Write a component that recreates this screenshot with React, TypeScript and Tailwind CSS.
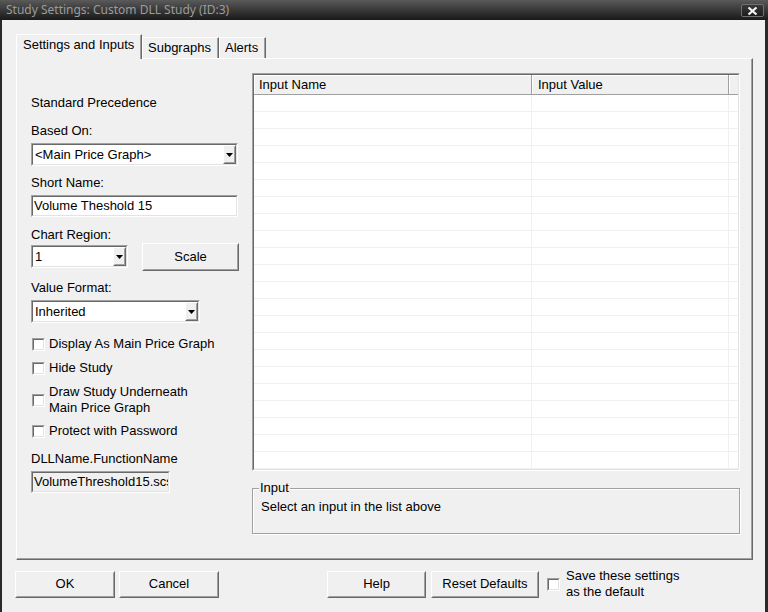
import React from "react";

type BoxProps = { className?: string; inner?: string; children?: React.ReactNode };

function Sunken({ className = "", inner = "", children }: BoxProps) {
  return (
    <div className={`border border-t-[#a0a0a0] border-l-[#a0a0a0] border-r-white border-b-white ${className}`}>
      <div className={`h-full border border-t-[#696969] border-l-[#696969] border-r-[#e3e3e3] border-b-[#e3e3e3] ${inner}`}>
        {children}
      </div>
    </div>
  );
}

function Raised({ className = "", inner = "", children }: BoxProps) {
  return (
    <div className={`border border-t-white border-l-white border-r-[#696969] border-b-[#696969] ${className}`}>
      <div className={`h-full border border-t-[#f0f0f0] border-l-[#f0f0f0] border-r-[#a0a0a0] border-b-[#a0a0a0] bg-[#f0f0f0] ${inner}`}>
        {children}
      </div>
    </div>
  );
}

function Combo({ w, text }: { w: string; text: string }) {
  return (
    <Sunken className={`h-[23px] ${w}`} inner="flex bg-white">
      <div className="flex-1 overflow-hidden whitespace-nowrap pl-[2px] leading-[19px]">{text}</div>
      <Raised className="h-full w-[13px]" inner="flex items-center justify-center">
        <svg width="7" height="4" viewBox="0 0 7 4">
          <polygon points="0,0 7,0 3.5,4" fill="#000" />
        </svg>
      </Raised>
    </Sunken>
  );
}

function Check() {
  return <Sunken className="h-[13px] w-[13px] shrink-0" inner="bg-white" />;
}

function Button({ w, label }: { w: string; label: string }) {
  return (
    <Raised className={`h-[27px] shrink-0 ${w}`} inner="flex items-center justify-center">
      {label}
    </Raised>
  );
}

const rows = Array.from({ length: 23 }, (_, i) => i);

export default function App() {
  return (
    <div className="flex h-[612px] w-[768px] flex-col overflow-hidden font-['Liberation_Sans',Arial,sans-serif] text-[13px] leading-[16px] text-black">
      {/* title bar */}
      <div className="flex h-[20px] shrink-0 items-start justify-between bg-gradient-to-b from-[#5a5a5a] to-[#1a1a1a]">
        <div className="pl-[6px] pt-[2px] font-['Noto_Sans',sans-serif] text-[12px] text-[#9c9c9c]">
          Study Settings: Custom DLL Study (ID:3)
        </div>
        <div className="mr-[4px] mt-[4px] flex h-[13px] w-[23px] items-center justify-center rounded-[2px] border border-[#707070] bg-gradient-to-b from-[#3a3a3a] to-[#1c1c1c]">
          <svg width="11" height="8" viewBox="0 0 11 8">
            <path d="M1.5 0.5 L9.5 7.5 M9.5 0.5 L1.5 7.5" stroke="#f2f2f2" strokeWidth="2.2" />
          </svg>
        </div>
      </div>

      {/* body */}
      <div className="flex flex-1 flex-col border-l-2 border-r-[3px] border-[#2a2a2a] bg-[#f0f0f0]">
        {/* tabs */}
        <div className="ml-[14px] mt-[14px] flex h-[24px] items-end">
          <div className="relative z-10 -mb-px h-[25px] w-[126px] border-l border-t border-r border-l-white border-t-white border-r-[#696969] bg-[#f0f0f0] pl-[6px] pt-[2px] shadow-[inset_-1px_0_0_#a0a0a0]">
            Settings and Inputs
          </div>
          <div className="h-[21px] w-[77px] border-l border-t border-r border-l-white border-t-white border-r-[#696969] pl-[5px] pt-[2px] shadow-[inset_-1px_0_0_#a0a0a0]">
            Subgraphs
          </div>
          <div className="h-[21px] w-[47px] border-l border-t border-r border-l-white border-t-white border-r-[#696969] pl-[5px] pt-[2px] shadow-[inset_-1px_0_0_#a0a0a0]">
            Alerts
          </div>
        </div>

        {/* tab panel */}
        <div className="ml-[14px] flex h-[502px] w-[737px] border border-t-white border-l-white border-r-[#696969] border-b-[#696969] pl-[14px] shadow-[inset_-1px_-1px_0_#a0a0a0]">
          {/* left column */}
          <div className="flex w-[209px] shrink-0 flex-col">
            <div className="mt-[36px]">Standard Precedence</div>
            <div className="mt-[12px]">Based On:</div>
            <div className="mt-[4px]">
              <Combo w="w-[207px]" text="<Main Price Graph>" />
            </div>
            <div className="mt-[9px]">Short Name:</div>
            <Sunken className="mt-[4px] h-[22px] w-[207px]" inner="bg-white pl-[1px] leading-[18px]">
              Volume Theshold 15
            </Sunken>
            <div className="mt-[10px]">Chart Region:</div>
            <div className="flex h-[28px] items-start">
              <div className="mt-[2px]">
                <Combo w="w-[97px]" text="1" />
              </div>
              <div className="ml-[14px]">
                <Button w="w-[97px] h-[28px]" label="Scale" />
              </div>
            </div>
            <div className="mt-[9px]">Value Format:</div>
            <div className="mt-[4px]">
              <Combo w="w-[169px]" text="Inherited" />
            </div>
            <div className="ml-[1px] mt-[13px] flex items-center gap-[4px]">
              <Check />
              <span>Display As Main Price Graph</span>
            </div>
            <div className="ml-[1px] mt-[8px] flex items-center gap-[4px]">
              <Check />
              <span>Hide Study</span>
            </div>
            <div className="ml-[1px] mt-[8px] flex items-center gap-[4px]">
              <Check />
              <span>
                Draw Study Underneath
                <br />
                Main Price Graph
              </span>
            </div>
            <div className="ml-[1px] mt-[7px] flex items-center gap-[4px]">
              <Check />
              <span>Protect with Password</span>
            </div>
            <div className="mt-[12px]">DLLName.FunctionName</div>
            <Sunken className="mt-[4px] h-[22px] w-[139px]" inner="overflow-hidden whitespace-nowrap bg-[#f0f0f0] pl-[1px] leading-[18px]">
              VolumeThreshold15.scsf_VolumeThreshold
            </Sunken>
          </div>

          {/* right column */}
          <div className="ml-[12px] flex w-[488px] shrink-0 flex-col">
            <Sunken className="mt-[14px] h-[398px] w-[488px]" inner="flex flex-col overflow-hidden bg-white">
              <div className="flex h-[20px] shrink-0 bg-[#f0f0f0]">
                <div className="w-[278px] border-b border-r border-b-[#a0a0a0] border-r-[#a0a0a0] pl-[5px] pt-[2px] shadow-[inset_1px_1px_0_white]">
                  Input Name
                </div>
                <div className="w-[197px] border-b border-r border-b-[#a0a0a0] border-r-[#a0a0a0] pl-[6px] pt-[2px] shadow-[inset_1px_1px_0_white]">
                  Input Value
                </div>
                <div className="flex-1 border-b border-b-[#a0a0a0] shadow-[inset_1px_1px_0_white]" />
              </div>
              {rows.map((r) => (
                <div key={r} className="flex h-[17px] shrink-0 border-b border-b-[#f0f0f0]">
                  <div className="w-[278px] border-r border-r-[#f0f0f0]" />
                  <div className="w-[197px] border-r border-r-[#f0f0f0]" />
                  <div className="flex-1" />
                </div>
              ))}
            </Sunken>

            <div className="relative mt-[17px] h-[46px] w-[488px] border border-[#a0a0a0] pl-[8px] pt-[10px] shadow-[inset_1px_1px_0_white,1px_1px_0_white]">
              <span className="absolute -top-[9px] left-[6px] bg-[#f0f0f0] px-[1px]">Input</span>
              Select an input in the list above
            </div>
          </div>
        </div>

        {/* bottom buttons */}
        <div className="mt-[8px] flex items-center pl-[13px]">
          <Button w="w-[100px]" label="OK" />
          <div className="ml-[4px]">
            <Button w="w-[100px]" label="Cancel" />
          </div>
          <div className="ml-[108px]">
            <Button w="w-[99px]" label="Help" />
          </div>
          <div className="ml-[5px]">
            <Button w="w-[108px]" label="Reset Defaults" />
          </div>
          <div className="ml-[8px] flex items-center gap-[6px]">
            <Check />
            <span>
              Save these settings
              <br />
              as the default
            </span>
          </div>
        </div>
      </div>
    </div>
  );
}
